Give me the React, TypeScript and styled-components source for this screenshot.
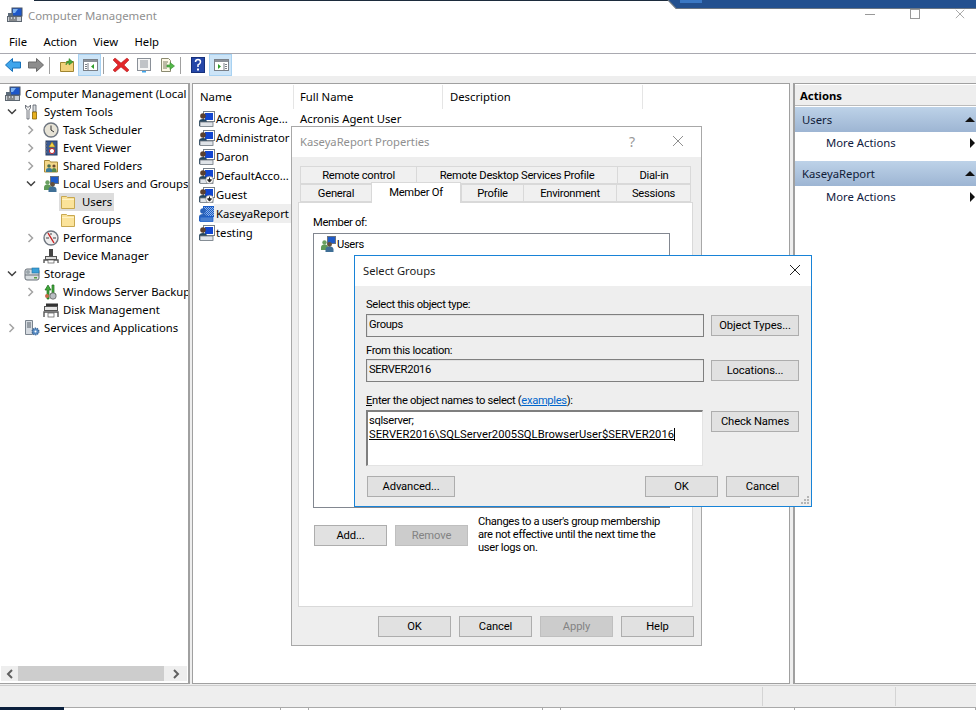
import React from "react";
import styled, { createGlobalStyle } from "styled-components";

const Global = createGlobalStyle`
  * { box-sizing: border-box; }
  html, body { margin: 0; padding: 0; background: #fff; }
  body { font-family: "Noto Sans", "Open Sans", sans-serif; font-size: 11.3px; color: #000; }
`;

const Desktop = styled.div`
  position: relative; width: 976px; height: 710px; overflow: hidden;
  display: flex; flex-direction: column; background: #fff;
`;
const TopEdge = styled.div`
  position: absolute; top: 0; left: 34px; width: 636px; height: 1px; background: #1c2b3c;
`;
const BlueBand = styled.svg`
  position: absolute; top: 0; left: 664px; width: 312px; height: 10px;
`;
const TitleBar = styled.div`
  height: 30px; display: flex; align-items: center; padding: 0 0 0 7px; gap: 1px; color: #8f8f8f; font-size: 11.4px;
`;
const TitleText = styled.span` flex: 1; `;
const WinControls = styled.div`
  display: flex; align-items: center; height: 30px; padding-right: 11px; gap: 35px; margin-top: -2px;
`;
const MenuBar = styled.div`
  height: 24px; display: flex; align-items: center; padding: 0 0 0 9px; gap: 16.4px; border-bottom: 1px solid #a9a9b0;
`;
const MenuItem = styled.span``;
const Toolbar = styled.div`
  height: 22px; display: flex; align-items: stretch; padding-left: 1px; background: #fff;
`;
const ToolBtn = styled.div<{ $active?: boolean }>`
  width: 23px; display: flex; align-items: center; justify-content: center;
  background: ${p => (p.$active ? "#cce4f7" : "transparent")};
  border: 1px solid ${p => (p.$active ? "#a8d2f2" : "transparent")};
`;
const ToolSep = styled.div`
  width: 1px; margin: 3px 5px 2px 2px; background: #a0a0a0;
`;
const Workspace = styled.div`
  flex: 1; display: flex; background: #eee; padding-top: 7px; min-height: 0;
`;
const TreePane = styled.div`
  width: 190px; height: 601px; background: #fff; border: 1px solid #a0a0a0; border-width: 1px 2px 1px 0;
  display: flex; flex-direction: column; overflow: hidden;
`;
const TreeBody = styled.div` flex: 1; padding-top: 1px; `;
const TreeRow = styled.div<{ $depth: number }>`
  height: 18px; display: flex; align-items: center; white-space: nowrap; overflow: hidden;
  padding-left: ${p => [5, 0, 19, 36][p.$depth]}px;
`;
const Chevron = styled.span`
  width: 24px; height: 16px; display: flex; align-items: center; justify-content: center; flex: none;
`;
const IconBox = styled.span`
  width: 16px; height: 16px; flex: none; display: flex; margin-right: 4px;
`;
const TreeLabel = styled.span`
  line-height: 16px;
`;
const FolderSel = styled.span`
  display: flex; align-items: center; background: #ddd; height: 18px; width: 55px; margin-left: -1px; padding-left: 1px;
`;
const FolderPlain = styled.span`
  display: flex; align-items: center; margin-left: -1px; padding-left: 1px;
`;
const FolderText = styled(TreeLabel)` margin-left: 2px; `;
const HScroll = styled.div`
  height: 15px; margin: 0 0 2px 1px; display: flex; background: #eee; align-items: stretch; width: 186px;
`;
const ScrollEnd = styled.div<{ $w: number }>`
  width: ${p => p.$w}px; display: flex; align-items: center; justify-content: center;
`;
const ScrollThumb = styled.div` flex: 1; background: #cdcdcd; `;
const ListPane = styled.div`
  width: 598px; height: 601px; margin-left: 2px; background: #fff; border: 1px solid #a0a0a0;
`;
const ListHead = styled.div`
  height: 25px; display: flex; align-items: center;
`;
const HeadCell = styled.div<{ $w: number; $pad: number }>`
  width: ${p => p.$w}px; height: 24px; padding-left: ${p => p.$pad}px; line-height: 24px; border-right: 1px solid #e5e5e5; flex: none;
`;
const ListRows = styled.div``;
const ListRow = styled.div`
  height: 19px; display: flex; align-items: center; padding-left: 6px; white-space: nowrap;
`;
const UserCell = styled.div`
  width: 101px; display: flex; align-items: center; flex: none;
`;
const UserName = styled.span<{ $sel?: boolean }>`
  margin-left: -5px; padding: 0 2px; width: 77px; line-height: 19px; overflow: hidden;
  ${p => (p.$sel ? "background:#eee;" : "")}
`;
const ActionsPane = styled.div`
  width: 183px; height: 601px; margin-left: 3px; background: #fff; border-left: 2px solid #a0a0a0; border-top: 1px solid #a0a0a0; border-bottom: 1px solid #a0a0a0;
  padding-top: 1px;
`;
const ActionsHead = styled.div`
  height: 21px; background: #eee; font-weight: 700; padding-left: 5px; line-height: 21px; border-bottom: 1px solid #bbb;
`;
const ActionBand = styled.div`
  height: 25px; margin-top: 1px; background: linear-gradient(#bdd2e8, #9db5d3); display: flex; align-items: center;
  justify-content: space-between; padding: 0 0 1px 7px; color: #102038;
`;
const ActionLink = styled.div`
  height: 24px; margin-bottom: 5px; padding-bottom: 3px; display: flex; align-items: center; justify-content: space-between; padding-left: 31px; color: #102040;
`;
const StatusBar = styled.div`
  height: 25px; background: #eee; border-top: 1px solid #ccc; display: flex; flex-direction: column;
`;
const StatusMain = styled.div` flex: 1; display: flex; padding-top: 1px; `;
const StatusCell = styled.div<{ $w: number }>`
  width: ${p => p.$w}px; margin-bottom: 1px; border-right: 1px solid #d4d4d4;
`;
const StatusStrip = styled.div` height: 3px; display: flex; `;
const StatusPane = styled.div<{ $w: number; $dark?: boolean }>`
  width: ${p => p.$w}px; height: 3px; flex: none; border-top: 1px solid #a9a9a9; border-right: 1px solid #a9a9a9;
  background: ${p => (p.$dark ? "#0a1f3c" : "#fff")};
  ${p => (p.$dark ? "border:0;" : "")}
`;

/* dialogs */
const DialogBase = styled.div`
  position: absolute; display: flex; flex-direction: column; background: #eee;
  font-family: Roboto, "Noto Sans", sans-serif; font-size: 11.2px; letter-spacing: -0.33px;
`;
const PropsWindow = styled(DialogBase)`
  left: 291px; top: 126px; width: 411px; height: 520px; border: 1px solid #a8a8a8;
`;
const DlgTitle = styled.div<{ $active?: boolean }>`
  height: 30px; background: #fff; display: flex; align-items: center; flex: none;
  font-family: "Noto Sans", sans-serif; font-size: 11.2px; letter-spacing: 0;
  padding: 0 ${p => (p.$active ? "10px" : "17px")} 2px 8px; color: ${p => (p.$active ? "#1a1a1a" : "#8f8f8f")};
`;
const DlgTitleText = styled.span` flex: 1; `;
const HelpMark = styled.span` color: #999; font-size: 14px; margin-right: 37px; `;
const TabRow = styled.div<{ $first?: boolean }>`
  display: flex; height: 18px; margin-left: 8px; margin-top: ${p => (p.$first ? "9px" : "0")};
  align-items: flex-end; letter-spacing: -0.25px;
`;
const Tab = styled.div<{ $w: number; $active?: boolean }>`
  width: ${p => p.$w}px; flex: none; text-align: center;
  height: ${p => (p.$active ? "21px" : "18px")};
  line-height: ${p => (p.$active ? "19px" : "18px")};
  background: ${p => (p.$active ? "#fff" : "#f0f0f0")};
  border: 1px solid #d9d9d9; border-right-width: 0;
  ${p => (p.$active ? "border-bottom:0; border-right-width:1px; margin-bottom:-1px; position:relative; z-index:2;" : "")}
  &:last-child { border-right-width: 1px; }
`;
const TabPanel = styled.div`
  margin-left: 6px; width: 395px; height: 405px; background: #fff; border: 1px solid #d9d9d9; padding: 11px 14px 0;
  position: relative; z-index: 1;
`;
const FieldLabel = styled.div` height: 16px; line-height: 18px; `;
const MemberList = styled.div`
  margin-top: 3px; width: 357px; height: 275px; border: 1px solid #828790; padding: 1px 6px; display: flex; flex-direction: column;
`;
const MemberItem = styled.div` display: flex; align-items: center; height: 18px; `;
const MemberIcon = styled(IconBox)` margin-right: 1px; `;
const MemberRow = styled.div` display: flex; margin-top: 7px; `;
const PushBtn = styled.div<{ $w?: number; $disabled?: boolean }>`
  width: ${p => p.$w ?? 73}px; height: 21px; flex: none; text-align: center; line-height: 20px; letter-spacing: -0.1px;
  background: ${p => (p.$disabled ? "#ccc" : "#e1e1e1")};
  border: 1px solid ${p => (p.$disabled ? "#bfbfbf" : "#adadad")};
  color: ${p => (p.$disabled ? "#838383" : "#000")};
`;
const AddBtnSlot = styled.div` display: flex; gap: 8px; margin: 10px 10px 0 1px; `;
const Note = styled.div` line-height: 13px; white-space: nowrap; `;
const DlgFooter = styled.div`
  display: flex; justify-content: flex-end; gap: 8px; margin-top: 9px; padding-right: 7px;
`;
const SelectWindow = styled(DialogBase)`
  left: 354px; top: 255px; width: 458px; height: 252px; z-index: 5; border: 1px solid #1883d7;
`;
const SelectBody = styled.div` padding: 10px 0 0 11px; position: relative; flex: 1; `;
const SelectGrid = styled.div`
  display: grid; grid-template-columns: 338px 88px; column-gap: 7px; align-items: center;
`;
const ReadField = styled.div<{ $top?: number }>`
  height: 23px; margin-top: ${p => p.$top ?? 2}px; border: 1px solid #7f7f7f; padding-left: 2px; line-height: 19px; box-shadow: inset 1px 1px 0 #e0e0e0;
`;
const GridBtnCell = styled.div<{ $top?: number }>` margin-top: ${p => p.$top ?? 2}px; `;
const GroupLabel = styled(FieldLabel)<{ $top?: number }>`
  grid-column: 1 / 3; margin-top: ${p => p.$top ?? 0}px; white-space: nowrap;
`;
const NamesBox = styled.div`
  width: 337px; height: 56px; margin-top: 2px; background: #fff; padding: 2px 0 0 1px; line-height: 14px;
  border: 1px solid #e3e3e3; border-top: 2px solid #7f7f7f; border-left: 2px solid #7f7f7f; white-space: nowrap;
`;
const Resolved = styled.span`
  text-decoration: underline; border-right: 1px solid #000; letter-spacing: 0.05px;
`;
const ExampleLink = styled.span` color: #0066cc; text-decoration: underline; `;
const AccessKey = styled.span` text-decoration: underline; `;
const SelectFooter = styled.div`
  display: flex; gap: 8px; margin: 10px 0 0 1px; width: 432px;
`;
const FooterGap = styled.div` flex: 1; `;
const TopBtnCell = styled.div` align-self: start; margin-top: 3px; `;
const Grip = styled.svg` position: absolute; right: 1px; bottom: 1px; `;

/* icons */
const Sv: React.FC<{ s?: number; children: React.ReactNode }> = ({ s = 16, children }) => (
  <svg width={s} height={s} viewBox="0 0 16 16" style={{ display: "block" }}>{children}</svg>
);
const Computer = () => (
  <Sv>
    <rect x="5" y="1" width="10" height="8" fill="#1d56c8" stroke="#4a5563" />
    <path d="M6 2h5l-3 4H6z" fill="#7fb4f0" />
    <rect x="1" y="6" width="5" height="3" fill="#5c6b7a" />
    <rect x="0.5" y="9.5" width="14" height="5" fill="#c9ced4" stroke="#5d6670" />
    <path d="M2 11h2M5 11h2M8 11h2M2 13h8" stroke="#444" />
  </Sv>
);
const UserIco: React.FC<{ down?: boolean; sel?: boolean }> = ({ down, sel }) => (
  <Sv>
    {sel && <defs><pattern id="dith" width="2" height="2" patternUnits="userSpaceOnUse"><rect width="2" height="2" fill="#1a5cc8" /><rect width="1" height="1" fill="#8fb4e8" /><rect x="1" y="1" width="1" height="1" fill="#8fb4e8" /></pattern></defs>}
    <rect x="4.5" y="0.5" width="11" height="10" fill={sel ? "url(#dith)" : "#fff"} stroke={sel ? "#1a5cc8" : "#77808a"} />
    {!sel && <rect x="6" y="2" width="8" height="7" fill="#1246d0" />}
    <circle cx="4" cy="5" r="2.8" fill={sel ? "#2a62b8" : "#5b4030"} />
    <path d="M0 15v-4q0-3 4-3t4 3v4z" fill={sel ? "#2a62b8" : "#26455f"} />
    <rect x="1" y="11" width="13" height="4.5" fill={sel ? "#4a80d0" : "#dfe3e8"} stroke={sel ? "#1a5cc8" : "#6b747e"} strokeWidth=".8" />
    {down && !sel && <><circle cx="10.5" cy="12" r="3.8" fill="#fff" stroke="#777" strokeWidth=".6" /><path d="M10.5 9.5v3.5M8.5 11.8l2 2.4 2-2.4z" stroke="#222" fill="#222" /></>}
  </Sv>
);
const Tools = () => (
  <Sv>
    <path d="M1.500 1v3l1.500 2v9h2V6l1.500-2V1L5 3H3z" fill="#f4f4f4" stroke="#555c66" strokeWidth=".8" />
    <path d="M9 1h3v7h-3z" fill="#d8dce0" stroke="#555c66" strokeWidth=".8" />
    <path d="M8.500 8h4v7h-4z" fill="#e7b020" stroke="#8a6400" strokeWidth=".8" />
  </Sv>
);
const Clock = () => (
  <Sv>
    <circle cx="8" cy="8" r="7" fill="#e7e3d6" stroke="#6f7680" strokeWidth="1.4" />
    <path d="M8 3.5V8l3 2" stroke="#333" strokeWidth="1" fill="none" />
  </Sv>
);
const EventLog = () => (
  <Sv>
    <rect x="3" y="1" width="11" height="14" fill="#3b5a92" stroke="#2a3f66" />
    <path d="M2 3h2M2 6h2M2 9h2M2 12h2" stroke="#888" />
    <path d="M9 2l3 5H6z" fill="#f4d24a" stroke="#a88510" strokeWidth=".6" />
    <circle cx="9" cy="11" r="2.6" fill="#fff" stroke="#c8282a" />
  </Sv>
);
const Folder = () => (
  <Sv>
    <path d="M1.500 2.500h5l1 1h7v11h-13z" fill="#fbe39a" stroke="#c8a850" />
    <path d="M2 5.500h12" stroke="#fff2c4" />
  </Sv>
);
const SharedFolder = () => (
  <Sv>
    <path d="M1.500 2.500h5l1 1.500h7v10h-13z" fill="#f3d78a" stroke="#a88a3a" />
    <circle cx="6" cy="8" r="1.800" fill="#4a6e50" />
    <path d="M3 14v-2q0-2 3-2t3 2v2z" fill="#3a7a9a" />
    <circle cx="11" cy="8" r="1.600" fill="#6a4a30" />
    <path d="M9 14v-2q0-2 2-2t2.500 2v2z" fill="#54884a" />
  </Sv>
);
const UsersGroup = () => (
  <Sv>
    <rect x="7.500" y="0.500" width="8" height="7" fill="#1f5bc8" stroke="#6a7380" />
    <circle cx="4.500" cy="6.500" r="2.200" fill="#6aa060" />
    <path d="M1 14v-2.500q0-3 3.500-3T8 11.500V14z" fill="#5f9a58" />
    <circle cx="9.500" cy="8.500" r="2.400" fill="#64503c" />
    <path d="M5.500 16v-2.500q0-3 4-3t4 3V16z" fill="#3f6f96" />
  </Sv>
);
const Perf = () => (
  <Sv>
    <circle cx="8" cy="8" r="7" fill="#eee" stroke="#6f7680" strokeWidth="1.4" />
    <path d="M5 3l6 10" stroke="#c82020" strokeWidth="1.4" />
    <path d="M3 8h3M10 8h3M8 3v2" stroke="#444" />
  </Sv>
);
const Device = () => (
  <Sv>
    <rect x="6" y="1" width="4" height="7" fill="#444" />
    <rect x="2.500" y="8.500" width="11" height="3" fill="#ddd" stroke="#555" />
    <path d="M1 15v-3h14v3" fill="none" stroke="#555" strokeWidth="1.4" />
    <rect x="5" y="12" width="6" height="3" fill="#fff" stroke="#555" strokeWidth=".7" />
  </Sv>
);
const Storage = () => (
  <Sv>
    <rect x="1" y="3" width="14" height="11" rx="2" fill="#d8dde0" stroke="#687078" />
    <path d="M1 9h14" stroke="#687078" />
    <rect x="8" y="2" width="7" height="5" fill="#3aa0d8" stroke="#2070a0" strokeWidth=".6" />
    <circle cx="4" cy="6" r="2" fill="#9aa4aa" />
    <rect x="10" y="11" width="3" height="1.500" fill="#5aa040" />
  </Sv>
);
const Backup = () => (
  <Sv>
    <path d="M4 15V6H2l3-5 3 5H6v9z" fill="#3fa83a" stroke="#1c6a1a" strokeWidth=".7" />
    <path d="M11 1v9h2l-3 5-3-5h2V1z" fill="#46b040" stroke="#1c6a1a" strokeWidth=".7" />
    <circle cx="10" cy="12" r="3.200" fill="#b9bdc2" stroke="#555" strokeWidth=".7" />
    <circle cx="4" cy="12" r="2" fill="#c96a4a" />
  </Sv>
);
const Disk = () => (
  <Sv>
    <rect x="3" y="1.500" width="12" height="3" fill="#333" />
    <rect x="1.500" y="4.500" width="13" height="4" fill="#e4e4e4" stroke="#555" />
    <path d="M1 15v-5h14v5" fill="none" stroke="#555" strokeWidth="1.4" />
    <rect x="5" y="11" width="6" height="4" fill="#fff" stroke="#555" strokeWidth=".7" />
  </Sv>
);
const Services = () => (
  <Sv>
    <path d="M1.500 0.500h7v14h-7z" fill="#d5dae0" stroke="#7a848e" />
    <path d="M3 3h4M3 5h4M3 7h4" stroke="#56606a" />
    <circle cx="11.500" cy="11.500" r="3.200" fill="#5c90c8" stroke="#3a6698" strokeDasharray="1.200 .8" strokeWidth="1.600" />
    <circle cx="11.500" cy="11.500" r="1" fill="#fff" />
  </Sv>
);
const ChevR = () => (
  <svg width="8" height="10" viewBox="0 0 8 10"><path d="M1.500 1l4 4-4 4" stroke="#a3a3a3" strokeWidth="1.500" fill="none" /></svg>
);
const ChevD = () => (
  <svg width="10" height="8" viewBox="0 0 10 8"><path d="M1 1.500l4 4 4-4" stroke="#404040" strokeWidth="1.500" fill="none" /></svg>
);
const TriUp = () => (
  <svg width="12" height="7" viewBox="0 0 12 7" style={{ display: "block" }}><path d="M6 1l5 5H1z" fill="#111" /></svg>
);
const TriRight = () => (
  <svg width="8" height="12" viewBox="0 0 8 12" style={{ display: "block" }}><path d="M2 1l5 5-5 5z" fill="#111" /></svg>
);
const XMark: React.FC<{ c: string; s?: number }> = ({ c, s = 12 }) => (
  <svg width={s} height={s} viewBox="0 0 12 12" style={{ display: "block" }}><path d="M1 1l10 10M11 1L1 11" stroke={c} strokeWidth="1" fill="none" /></svg>
);
const ArrowNav: React.FC<{ dir: "l" | "r" }> = ({ dir }) => (
  <Sv>
    {dir === "l"
      ? <path d="M0.500 8l7-6.500V5h8v6h-8v3.500z" fill="#3ea5ec" stroke="#1670b8" />
      : <path d="M15.500 8l-7-6.500V5h-8v6h8v3.500z" fill="#8d8d8d" stroke="#6a6a6a" />}
  </Sv>
);
const UpFolder = () => (
  <Sv>
    <path d="M1.500 5.500h5l1-1h7v10h-13z" fill="#f2d27c" stroke="#a08530" />
    <path d="M7 8c0-3 1-4 3-4V1.500L14 5l-4 3V6c-1.500 0-2.500.5-3 2z" fill="#46a63c" stroke="#2a7a20" strokeWidth=".5" />
  </Sv>
);
const PaneIco: React.FC<{ right?: boolean }> = ({ right }) => (
  <Sv>
    <rect x="1.500" y="2.500" width="14" height="11" fill="#fff" stroke="#7a8088" />
    <rect x="2" y="3" width="13" height="2" fill="#8a9098" />
    <path d={right ? "M11 6v7" : "M6 6v7"} stroke="#7a8088" />
    {right
      ? <><path d="M5 7l3 2.500-3 2.500z" fill="#2f9e2a" /><path d="M12 7.500h2M12 9.500h2M12 11.500h2" stroke="#7a8088" /></>
      : <><path d="M12 7l-3 2.500 3 2.500z" fill="#2f9e2a" /><path d="M3 7.500h2M3 9.500h2M3 11.500h2" stroke="#7a8088" /></>}
  </Sv>
);
const RedX = () => (
  <Sv>
    <path d="M2 1l6 5 6-5 2 2-5 5 5 5-2 2-6-5-6 5-2-2 5-5-5-5z" fill="#e3262a" stroke="#a81818" strokeWidth=".5" />
  </Sv>
);
const PropsIco = () => (
  <Sv>
    <rect x="1.500" y="1.500" width="13" height="12" fill="#f6f6f6" stroke="#8a9098" />
    <path d="M4 4h8M4 6h8M4 8h8M4 10h8" stroke="#8a9098" />
    <rect x="6" y="14" width="4" height="1.500" fill="#3ea5ec" />
  </Sv>
);
const ExportIco = () => (
  <Sv>
    <path d="M2.500 1.500h7l2 2v11h-9z" fill="#fdf8e6" stroke="#8a8a70" />
    <path d="M4 5h5M4 7h4M4 9h4M4 11h4" stroke="#7a7a60" />
    <path d="M8 8h3V5.500L15.500 9 11 12.500V10H8z" fill="#55b84a" stroke="#2f8a28" strokeWidth=".6" />
  </Sv>
);
const HelpIco = () => (
  <svg width="14" height="16" viewBox="0 0 14 16" style={{ display: "block" }}>
    <rect x=".5" y=".5" width="13" height="15" fill="#2446a8" stroke="#16307a" />
    <path d="M4.500 5q0-2.500 2.500-2.500T9.500 5q0 1.500-2.500 3v2" stroke="#fff" strokeWidth="1.500" fill="none" />
    <rect x="6" y="11.500" width="2" height="2" fill="#fff" />
  </svg>
);

type Node = { d: number; icon: React.ReactNode; label: string; chev?: "r" | "d" };
const tree: Node[] = [
  { d: 0, icon: <Computer />, label: "Computer Management (Local" },
  { d: 1, icon: <Tools />, label: "System Tools", chev: "d" },
  { d: 2, icon: <Clock />, label: "Task Scheduler", chev: "r" },
  { d: 2, icon: <EventLog />, label: "Event Viewer", chev: "r" },
  { d: 2, icon: <SharedFolder />, label: "Shared Folders", chev: "r" },
  { d: 2, icon: <UsersGroup />, label: "Local Users and Groups", chev: "d" },
];
const tree2: Node[] = [
  { d: 2, icon: <Perf />, label: "Performance", chev: "r" },
  { d: 2, icon: <Device />, label: "Device Manager" },
  { d: 1, icon: <Storage />, label: "Storage", chev: "d" },
  { d: 2, icon: <Backup />, label: "Windows Server Backup", chev: "r" },
  { d: 2, icon: <Disk />, label: "Disk Management" },
  { d: 1, icon: <Services />, label: "Services and Applications", chev: "r" },
];
const TreeItem: React.FC<{ n: Node }> = ({ n }) => (
  <TreeRow $depth={n.d}>
    {n.d > 0 && <Chevron>{n.chev === "r" ? <ChevR /> : n.chev === "d" ? <ChevD /> : null}</Chevron>}
    <IconBox>{n.icon}</IconBox>
    <TreeLabel>{n.label}</TreeLabel>
  </TreeRow>
);

const users = [
  { n: "Acronis Age...", full: "Acronis Agent User" },
  { n: "Administrator" },
  { n: "Daron" },
  { n: "DefaultAcco...", down: true },
  { n: "Guest", down: true },
  { n: "KaseyaReport", sel: true },
  { n: "testing" },
];

export default function App() {
  return (
    <Desktop>
      <Global />
      <TopEdge />
      <BlueBand viewBox="0 0 312 10">
        <path d="M4 0l8 8.500H312V0z" fill="#23508f" />
        <path d="M4 0l8 8.500H312" stroke="#6c7682" fill="none" strokeWidth="1.200" />
        <rect x="16" y="0" width="22" height="3" fill="#3b78c4" />
      </BlueBand>
      <TitleBar>
        <IconBox><Computer /></IconBox>
        <TitleText>Computer Management</TitleText>
        <WinControls>
          <svg width="10" height="10" viewBox="0 0 10 10" style={{ display: "block" }}><path d="M0 5.500h10" stroke="#999" /></svg>
          <svg width="10" height="10" viewBox="0 0 10 10" style={{ display: "block" }}><rect x=".5" y=".5" width="9" height="9" fill="none" stroke="#999" /></svg>
          <XMark c="#999" s={10} />
        </WinControls>
      </TitleBar>
      <MenuBar>
        <MenuItem>File</MenuItem><MenuItem>Action</MenuItem><MenuItem>View</MenuItem><MenuItem>Help</MenuItem>
      </MenuBar>
      <Toolbar>
        <ToolBtn><ArrowNav dir="l" /></ToolBtn>
        <ToolBtn><ArrowNav dir="r" /></ToolBtn>
        <ToolSep />
        <ToolBtn><UpFolder /></ToolBtn>
        <ToolBtn $active><PaneIco /></ToolBtn>
        <ToolSep />
        <ToolBtn><RedX /></ToolBtn>
        <ToolBtn><PropsIco /></ToolBtn>
        <ToolBtn><ExportIco /></ToolBtn>
        <ToolSep />
        <ToolBtn><HelpIco /></ToolBtn>
        <ToolBtn $active><PaneIco right /></ToolBtn>
      </Toolbar>
      <Workspace>
        <TreePane>
          <TreeBody>
            {tree.map(n => <TreeItem key={n.label} n={n} />)}
            <TreeRow $depth={3}><Chevron /><FolderSel><IconBox><Folder /></IconBox><FolderText>Users</FolderText></FolderSel></TreeRow>
            <TreeRow $depth={3}><Chevron /><FolderPlain><IconBox><Folder /></IconBox><FolderText>Groups</FolderText></FolderPlain></TreeRow>
            {tree2.map(n => <TreeItem key={n.label} n={n} />)}
          </TreeBody>
          <HScroll>
            <ScrollEnd $w={17}><svg width="8" height="10" viewBox="0 0 8 10"><path d="M6 1L2 5l4 4" stroke="#606060" strokeWidth="2" fill="none" /></svg></ScrollEnd>
            <ScrollThumb />
            <ScrollEnd $w={23}><svg width="8" height="10" viewBox="0 0 8 10"><path d="M2 1l4 4-4 4" stroke="#606060" strokeWidth="2" fill="none" /></svg></ScrollEnd>
          </HScroll>
        </TreePane>
        <ListPane>
          <ListHead>
            <HeadCell $w={101} $pad={7}>Name</HeadCell>
            <HeadCell $w={149} $pad={6}>Full Name</HeadCell>
            <HeadCell $w={200} $pad={7}>Description</HeadCell>
          </ListHead>
          <ListRows>
            {users.map(u => (
              <ListRow key={u.n}>
                <UserCell>
                  <IconBox><UserIco down={u.down} sel={u.sel} /></IconBox>
                  <UserName $sel={u.sel}>{u.n}</UserName>
                </UserCell>
                <span>{u.full}</span>
              </ListRow>
            ))}
          </ListRows>
        </ListPane>
        <ActionsPane>
          <ActionsHead>Actions</ActionsHead>
          <ActionBand>Users<TriUp /></ActionBand>
          <ActionLink>More Actions<TriRight /></ActionLink>
          <ActionBand>KaseyaReport<TriUp /></ActionBand>
          <ActionLink>More Actions<TriRight /></ActionLink>
        </ActionsPane>
      </Workspace>
      <StatusBar>
        <StatusMain>
          <StatusCell $w={763} />
          <StatusCell $w={133} />
        </StatusMain>
        <StatusStrip>
          <StatusPane $w={64} $dark />
          <StatusPane $w={217} />
          <StatusPane $w={28} />
          <StatusPane $w={234} />
          <StatusPane $w={18} />
          <StatusPane $w={234} />
          <StatusPane $w={181} />
        </StatusStrip>
      </StatusBar>

      <PropsWindow>
        <DlgTitle>
          <DlgTitleText>KaseyaReport Properties</DlgTitleText>
          <HelpMark>?</HelpMark>
          <XMark c="#8f8f8f" />
        </DlgTitle>
        <TabRow $first>
          <Tab $w={116}>Remote control</Tab>
          <Tab $w={201}>Remote Desktop Services Profile</Tab>
          <Tab $w={74}>Dial-in</Tab>
        </TabRow>
        <TabRow>
          <Tab $w={71}>General</Tab>
          <Tab $w={90} $active>Member Of</Tab>
          <Tab $w={62}>Profile</Tab>
          <Tab $w={93}>Environment</Tab>
          <Tab $w={75}>Sessions</Tab>
        </TabRow>
        <TabPanel>
          <FieldLabel>Member of:</FieldLabel>
          <MemberList>
            <MemberItem><MemberIcon><UsersGroup /></MemberIcon>Users</MemberItem>
          </MemberList>
          <MemberRow>
            <AddBtnSlot>
              <PushBtn>Add...</PushBtn>
              <PushBtn $disabled>Remove</PushBtn>
            </AddBtnSlot>
            <Note>Changes to a user's group membership<br />are not effective until the next time the<br />user logs on.</Note>
          </MemberRow>
        </TabPanel>
        <DlgFooter>
          <PushBtn>OK</PushBtn>
          <PushBtn>Cancel</PushBtn>
          <PushBtn $disabled>Apply</PushBtn>
          <PushBtn>Help</PushBtn>
        </DlgFooter>
      </PropsWindow>

      <SelectWindow>
        <DlgTitle $active>
          <DlgTitleText>Select Groups</DlgTitleText>
          <XMark c="#222" />
        </DlgTitle>
        <SelectBody>
          <SelectGrid>
            <GroupLabel>Select this object type:</GroupLabel>
            <ReadField>Groups</ReadField>
            <GridBtnCell><PushBtn $w={88}>Object Types...</PushBtn></GridBtnCell>
            <GroupLabel $top={5}>From this location:</GroupLabel>
            <ReadField $top={1}>SERVER2016</ReadField>
            <GridBtnCell $top={1}><PushBtn $w={88}>Locations...</PushBtn></GridBtnCell>
            <GroupLabel $top={10}>
              <AccessKey>E</AccessKey>nter the object names to select (<ExampleLink>examples</ExampleLink>):
            </GroupLabel>
            <NamesBox>sqlserver;<br /><Resolved>SERVER2016\SQLServer2005SQLBrowserUser$SERVER2016</Resolved></NamesBox>
            <TopBtnCell><PushBtn $w={88}>Check Names</PushBtn></TopBtnCell>
          </SelectGrid>
          <SelectFooter>
            <PushBtn $w={88}>Advanced...</PushBtn>
            <FooterGap />
            <PushBtn>OK</PushBtn>
            <PushBtn>Cancel</PushBtn>
          </SelectFooter>
          <Grip width="10" height="10" viewBox="0 0 10 10">
            <path d="M7 1h2v2H7zM4 4h2v2H4zM7 4h2v2H7zM1 7h2v2H1zM4 7h2v2H4zM7 7h2v2H7z" fill="#b5b5b5" />
          </Grip>
        </SelectBody>
      </SelectWindow>
    </Desktop>
  );
}
